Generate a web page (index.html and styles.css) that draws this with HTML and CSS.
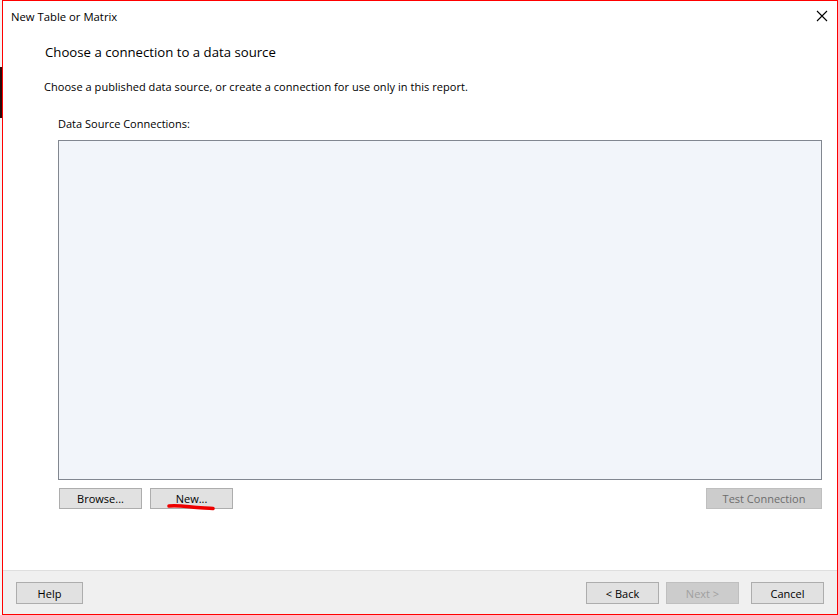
FILE: index.html
```html
<!DOCTYPE html>
<html>
<head>
<meta charset="utf-8">
<link rel="stylesheet" href="styles.css">
</head>
<body>
<div class="screen">
  <div class="edge"><div class="edge-dark"></div></div>
  <div class="dialog">
    <div class="titlebar">
      <span class="title">New Table or Matrix</span>
      <svg class="close" width="12" height="12" viewBox="0 0 12 12"><path d="M1 1 L11 11 M11 1 L1 11" stroke="#000" stroke-width="1.1" fill="none"/></svg>
    </div>
    <div class="main">
      <div class="heading">Choose a connection to a data source</div>
      <div class="subtext">Choose a published data source, or create a connection for use only in this report.</div>
      <div class="section">
        <div class="label">Data Source Connections:</div>
        <div class="listbox"></div>
        <div class="row">
          <button class="btn btn-browse">Browse...</button>
          <div class="new-wrap">
            <button class="btn btn-new">New...</button>
            <svg class="scribble" width="50" height="10" viewBox="0 0 50 10"><path d="M2 4 C 12 3, 22 5, 30 5.5 S 42 6, 46 6.5" stroke="#ee0000" stroke-width="3.5" fill="none" stroke-linecap="round"/></svg>
          </div>
          <div class="spacer"></div>
          <button class="btn btn-test" disabled>Test Connection</button>
        </div>
      </div>
    </div>
    <div class="footer">
      <button class="btn btn-help">Help</button>
      <div class="spacer"></div>
      <button class="btn btn-nav">&lt; Back</button>
      <button class="btn btn-nav btn-next" disabled>Next &gt;</button>
      <button class="btn btn-nav btn-cancel">Cancel</button>
    </div>
  </div>
</div>
</body>
</html>
```
FILE: styles.css
```css
html, body {
  margin: 0;
  padding: 0;
  background: #ffffff;
}
body {
  font-family: "Open Sans", "Noto Sans", sans-serif;
  font-size: 11px;
  color: #000;
}
.screen {
  display: flex;
  width: 838px;
  height: 615px;
  overflow: hidden;
}
.edge {
  width: 2px;
  flex: none;
  background: #f4f4f4;
  padding-top: 67px;
}
.edge-dark {
  height: 51px;
  background: #2a0a0a;
}
.dialog {
  width: 834px;
  height: 613px;
  border: 1px solid #ff0000;
  display: flex;
  flex-direction: column;
  background: #ffffff;
}
.titlebar {
  height: 30px;
  display: flex;
  align-items: center;
  padding-left: 8px;
  padding-right: 9px;
  flex: none;
}
.title {
  font-size: 11.3px;
  flex: 1;
}
.close {
  display: block;
}
.main {
  flex: 1;
  padding-left: 42px;
  padding-right: 15px;
}
.heading {
  margin-top: 11px;
  height: 20px;
  line-height: 20px;
  font-size: 13.2px;
}
.subtext {
  margin-top: 17px;
  height: 16px;
  line-height: 16px;
  font-size: 11px;
  margin-left: -1px;
  letter-spacing: 0.05px;
}
.section {
  margin-left: 13px;
}
.label {
  margin-top: 21px;
  height: 16px;
  line-height: 16px;
  font-size: 11px;
}
.listbox {
  margin-top: 8px;
  height: 338px;
  border: 1px solid #828790;
  background: #f2f5fa;
}
.row {
  margin-top: 8px;
  display: flex;
  align-items: flex-start;
}
.spacer {
  flex: 1;
}
.btn {
  font-family: "Open Sans", "Noto Sans", sans-serif;
  font-size: 11px;
  height: 21px;
  padding: 0;
  background: #e1e1e1;
  border: 1px solid #adadad;
  color: #000;
  line-height: 19px;
  border-radius: 0;
}
.btn-browse {
  width: 83px;
  margin-left: 1px;
}
.new-wrap {
  position: relative;
  margin-left: 8px;
}
.btn-new {
  width: 83px;
}
.scribble {
  position: absolute;
  left: 17px;
  top: 14px;
}
.btn-test {
  width: 116px;
  background: #cccccc;
  border-color: #bfbfbf;
  color: #6d6d6d;
}
.footer {
  box-sizing: border-box;
  height: 44px;
  flex: none;
  border-top: 1px solid #dfdfdf;
  background: #f0f0f0;
  display: flex;
  align-items: flex-start;
  padding: 11px 13px 0 13px;
}
.btn-help {
  width: 67px;
  height: 22px;
}
.btn-nav {
  width: 73px;
  height: 22px;
  margin-left: 7px;
}
.btn-next {
  background: #cccccc;
  border-color: #bfbfbf;
  color: #a0a0a0;
}
.btn-cancel {
  margin-left: 12px;
}
```
